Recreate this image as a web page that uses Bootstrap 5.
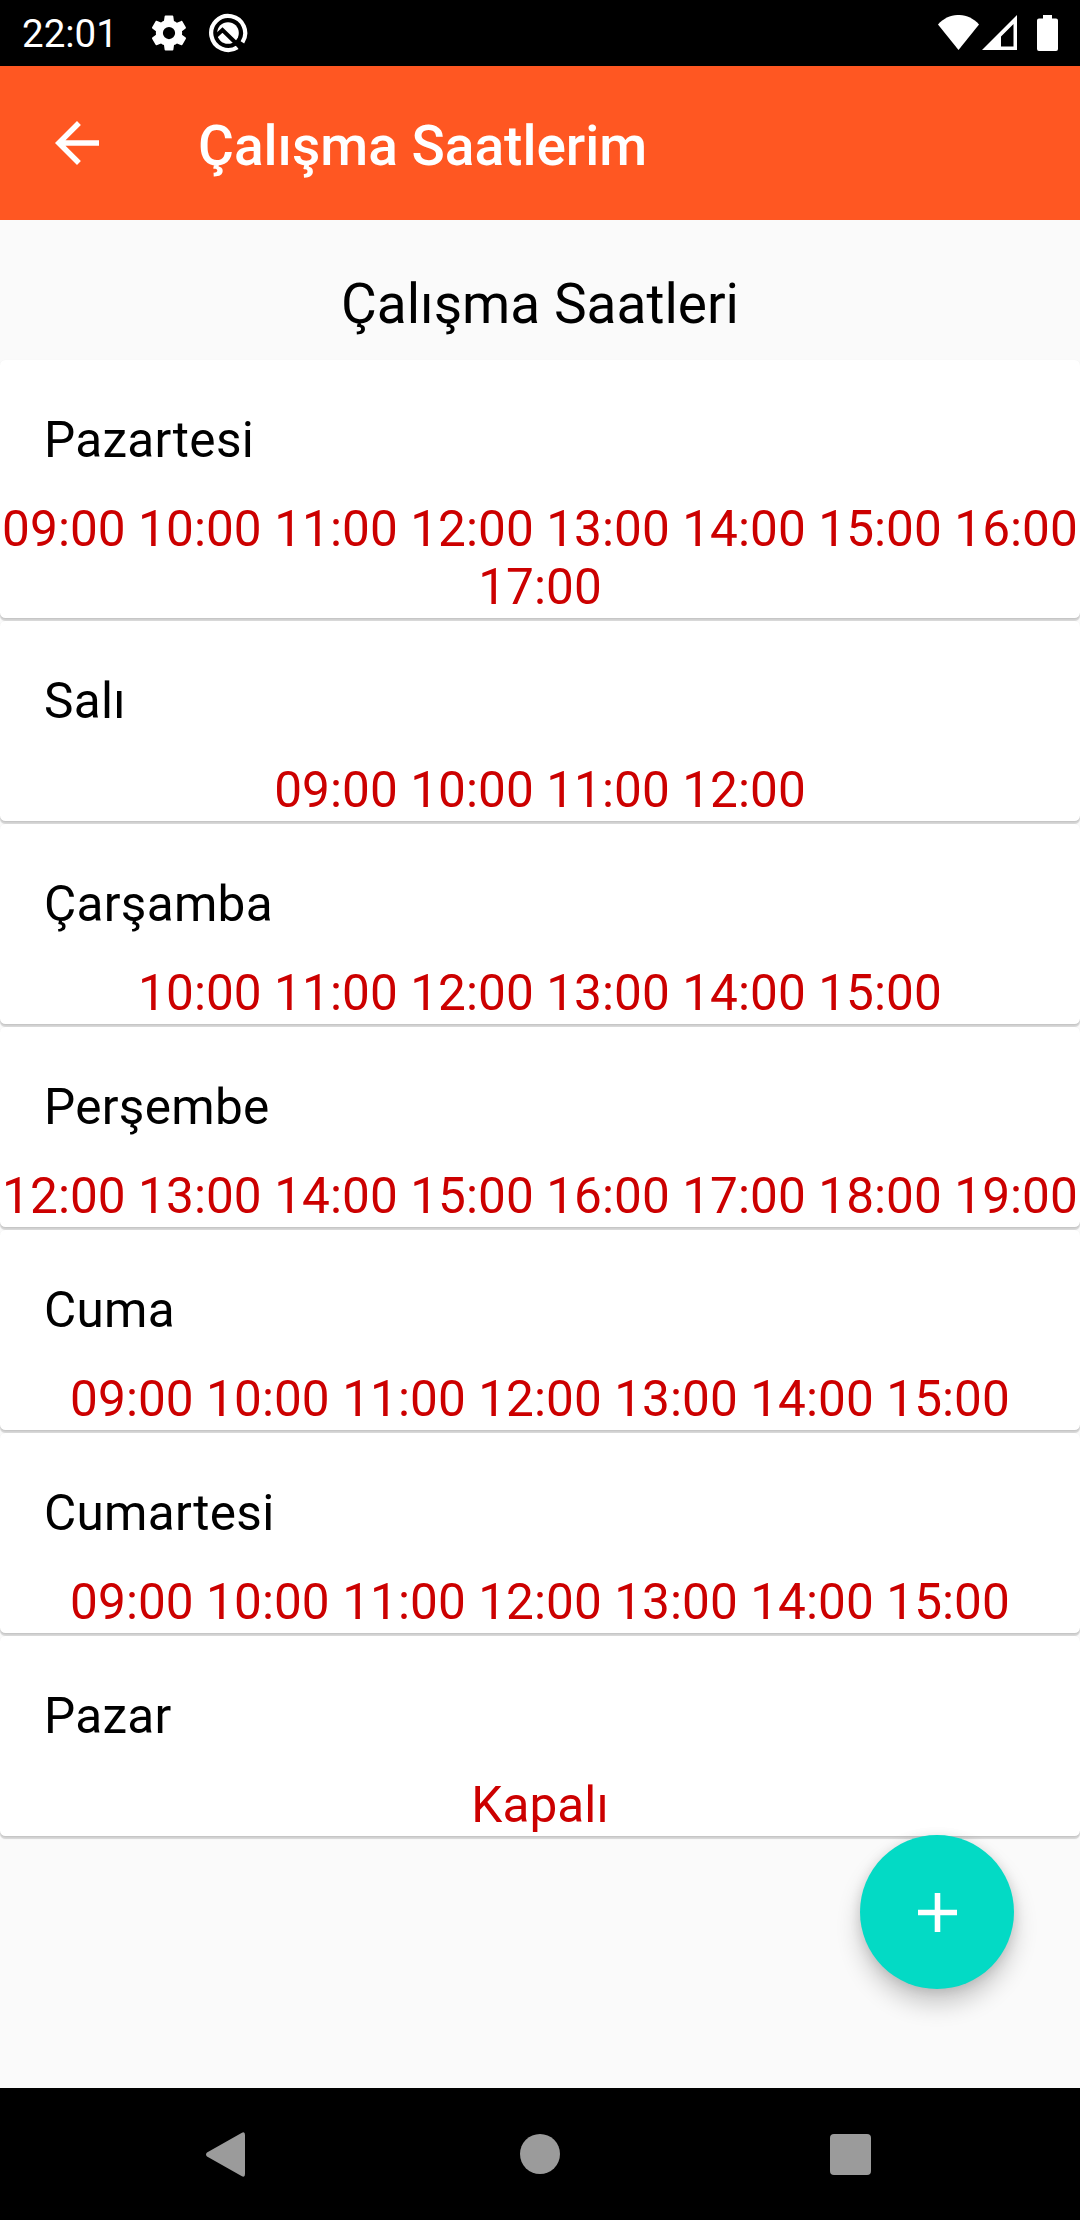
<!DOCTYPE html>
<html lang="tr">
<head>
<meta charset="utf-8">
<meta name="viewport" content="width=device-width, initial-scale=1">
<title>Çalışma Saatlerim</title>
<link href="https://cdn.jsdelivr.net/npm/bootstrap@5.3.0/dist/css/bootstrap.min.css" rel="stylesheet">
<style>
  body { font-family: Roboto, "Noto Sans", sans-serif; background: #fafafa; color: #000; }
  svg { display: block; flex: none; }
  .screen { width: 1080px; height: 2220px; }
  .status-bar { height: 66px; padding: 0 22px 0 22px; font-size: 38.5px; line-height: 45px; }
  .clock { width: 127px; padding-top: 1px; }
  .status-left svg + svg { margin-left: 19px; }
  .app-bar { height: 154px; padding: 0 55px; background: #ff5722; }
  .app-title { font-size: 55px; font-weight: 500; line-height: 64px; margin: 5px 0 0 99px; color: #fff; }
  .page-title { height: 140px; padding-top: 52px; font-size: 55px; font-weight: 400; line-height: 64px; }
  .day-list { gap: 3px; }
  .day-card { border: 0; border-radius: 5.5px; box-shadow: 0 3px 1px rgba(0,0,0,.14), 0 1px 2px rgba(0,0,0,.1); }
  .day-name { font-size: 49.5px; font-weight: 400; line-height: 58px; letter-spacing: .3px; padding: 51px 44px 0; }
  .day-hours { font-size: 49.5px; line-height: 58px; letter-spacing: .08px; padding-top: 31px; margin: 0 -10px 2px; color: #c00; }
  .fab { right: 66px; bottom: 99px; width: 154px; height: 154px; background: #03dac5; box-shadow: 0 15px 25px rgba(0,0,0,.2), 0 2px 12px rgba(0,0,0,.12); }
  .nav-keys { height: 132px; }
</style>
</head>
<body>
<div class="screen d-flex flex-column overflow-hidden">
  <div class="status-bar bg-black text-white d-flex align-items-center justify-content-between">
    <div class="status-left d-flex align-items-center">
      <span class="clock">22:01</span>
      <svg width="40" height="42" viewBox="0.6 0 22.8 24" fill="#fff"><path d="M19.400 13c0-.3.1-.6.1-1s0-.7-.1-1l2.100-1.600c.2-.15.24-.42.12-.64l-2-3.460c-.12-.22-.39-.3-.61-.22l-2.490 1c-.52-.4-1.080-.73-1.690-.98l-.38-2.650C14.460 2.180 14.250 2 14 2h-4c-.25 0-.46.18-.49.42l-.38 2.650c-.61.25-1.170.59-1.690.98l-2.490-1c-.23-.09-.49 0-.61.22l-2 3.460c-.13.22-.07.49.12.64L4.570 11c-.04.32-.07.65-.07.98s.03.66.07.98l-2.110 1.650c-.19.15-.24.42-.12.64l2 3.460c.12.22.39.3.61.22l2.490-1c.52.4 1.080.73 1.690.98l.38 2.650c.03.24.24.42.49.42h4c.25 0 .46-.18.49-.42l.38-2.650c.61-.25 1.170-.59 1.690-.98l2.490 1c.23.09.49 0 .61-.22l2-3.460c.12-.22.07-.49-.12-.64zM12 15.500a3.500 3.500 0 1 1 0-7 3.500 3.500 0 0 1 0 7z"/></svg>
      <svg width="40" height="40" viewBox="0 0 40 40" fill="none"><path d="M29.500 34.200A17 17 0 1 1 34.400 29.300" stroke="#fff" stroke-width="4.200"/><circle cx="20" cy="20" r="10.800" fill="#fff"/><path d="M8 23l6.500-6L33 35" stroke="#000" stroke-width="4"/></svg>
    </div>
    <div class="d-flex align-items-center">
      <svg width="120" height="36" viewBox="0 0 120 36" fill="#fff"><path d="M0 9.500C11-3.200 30-3.200 41 9.500L20.500 35z"/><path d="M44 35L79 0v35zM63 31.500h12.500V9L63 21.500z" fill-rule="evenodd"/><path d="M105 0h9v3.500h4a2 2 0 0 1 2 2V34a2 2 0 0 1-2 2h-17a2 2 0 0 1-2-2V5.500a2 2 0 0 1 2-2h4z"/></svg>
    </div>
  </div>

  <header class="app-bar d-flex align-items-center">
    <svg width="44" height="44" viewBox="4 4 16 16" fill="#fff"><path d="M20 11H7.830l5.590-5.590L12 4l-8 8 8 8 1.410-1.410L7.830 13H20z"/></svg>
    <h1 class="app-title">Çalışma Saatlerim</h1>
  </header>

  <main class="flex-grow-1 position-relative">
    <h2 class="page-title text-center mb-0">Çalışma Saatleri</h2>
    <div class="day-list d-flex flex-column">
      <section class="card day-card"><h3 class="day-name mb-0">Pazartesi</h3><div class="day-hours text-center">09:00 10:00 11:00 12:00 13:00 14:00 15:00 16:00<br>17:00</div></section>
      <section class="card day-card"><h3 class="day-name mb-0">Salı</h3><div class="day-hours text-center">09:00 10:00 11:00 12:00</div></section>
      <section class="card day-card"><h3 class="day-name mb-0">Çarşamba</h3><div class="day-hours text-center">10:00 11:00 12:00 13:00 14:00 15:00</div></section>
      <section class="card day-card"><h3 class="day-name mb-0">Perşembe</h3><div class="day-hours text-center">12:00 13:00 14:00 15:00 16:00 17:00 18:00 19:00</div></section>
      <section class="card day-card"><h3 class="day-name mb-0">Cuma</h3><div class="day-hours text-center">09:00 10:00 11:00 12:00 13:00 14:00 15:00</div></section>
      <section class="card day-card"><h3 class="day-name mb-0">Cumartesi</h3><div class="day-hours text-center">09:00 10:00 11:00 12:00 13:00 14:00 15:00</div></section>
      <section class="card day-card"><h3 class="day-name mb-0">Pazar</h3><div class="day-hours text-center">Kapalı</div></section>
    </div>
    <button class="fab btn border-0 rounded-circle p-0 position-absolute d-flex align-items-center justify-content-center" aria-label="Ekle">
      <svg width="39" height="39" viewBox="5 5 14 14" fill="#fff"><path d="M19 13h-6v6h-2v-6H5v-2h6V5h2v6h6z"/></svg>
    </button>
  </main>

  <nav class="nav-keys bg-black d-flex align-items-center">
    <svg width="1080" height="132" viewBox="0 0 1080 132" fill="#9b9b9b"><path d="M207 64.500L241.500 45q3.500-2 3.500 2V86q0 4-3.500 2L207 68.500q-2-2 0-4z"/><circle cx="540" cy="66" r="20"/><rect x="830" y="46" width="41" height="41" rx="4"/></svg>
  </nav>
</div>
<script src="https://cdn.jsdelivr.net/npm/bootstrap@5.3.0/dist/js/bootstrap.bundle.min.js"></script>
</body>
</html>
